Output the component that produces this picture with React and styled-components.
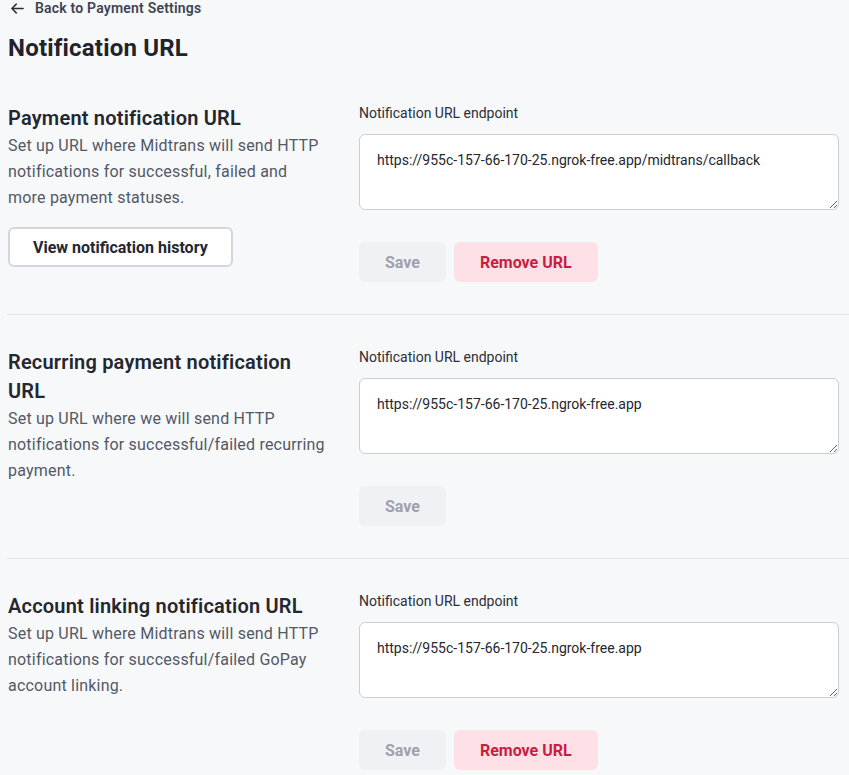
import React from "react";
import styled, { createGlobalStyle } from "styled-components";

const Global = createGlobalStyle`
  html, body { margin: 0; padding: 0; background: #f7f8fa; }
  body { font-family: Roboto, "Noto Sans", Arial, sans-serif; color: #1f232b; }
  * { box-sizing: border-box; }
`;

const Page = styled.div`
  padding: 0 0 0 7px;
  width: 849px;
`;

const BackLink = styled.a`
  display: flex;
  align-items: center;
  gap: 10px;
  height: 16px;
  padding-left: 3px;
  font-size: 14px;
  font-weight: 600;
  letter-spacing: 0.2px;
  color: #3d4452;
  text-decoration: none;
  cursor: pointer;
`;

const Title = styled.h1`
  margin: 16px 0 7px 1px;
  font-size: 24px;
  line-height: 32px;
  font-weight: 700;
  letter-spacing: 0.2px;
  color: #1f232b;
`;

const Section = styled.section`
  display: grid;
  grid-template-columns: 319px 480px;
  column-gap: 32px;
  padding: 32px 0 32px 1px;
  border-bottom: ${(p) => (p.$last ? "none" : "1px solid #e1e5ec")};
`;

const Left = styled.div`
  display: flex;
  flex-direction: column;
  align-items: flex-start;
  padding-top: 1px;
`;

const Heading = styled.h2`
  margin: 0;
  font-size: 20px;
  line-height: 29px;
  font-weight: 600;
  letter-spacing: 0.2px;
  color: #23272f;
`;

const Desc = styled.p`
  margin: 0;
  font-size: 16px;
  line-height: 26px;
  letter-spacing: 0.2px;
  color: #525866;
`;

const OutlineButton = styled.button`
  margin-top: 16px;
  height: 40px;
  padding: 0 23px;
  background: #fff;
  border: 2px solid #d3d6dd;
  border-radius: 6px;
  font-family: inherit;
  font-size: 16px;
  font-weight: 700;
  color: #23272f;
  cursor: pointer;
`;

const Right = styled.div`
  display: flex;
  flex-direction: column;
`;

const Label = styled.label`
  font-size: 14px;
  line-height: 20px;
  color: #2b2f38;
`;

const TextArea = styled.textarea`
  display: block;
  margin-top: 11px;
  width: 480px;
  height: 76px;
  padding: 15px 17px;
  border: 1px solid #c9cdd5;
  border-radius: 6px;
  background: #fff;
  font-family: inherit;
  font-size: 14px;
  line-height: 20px;
  color: #23272f;
  outline: none;
`;

const Actions = styled.div`
  display: flex;
  gap: 8px;
  margin-top: 32px;
`;

const Btn = styled.button`
  height: 40px;
  padding: 0 26px;
  border: none;
  border-radius: 6px;
  font-family: inherit;
  font-size: 16px;
  font-weight: 700;
  cursor: pointer;
  background: ${(p) => (p.$danger ? "#fde1e7" : "#eff1f4")};
  color: ${(p) => (p.$danger ? "#c81d3f" : "#9da1ac")};
`;

const ArrowLeft = () => (
  <svg width="15" height="15" viewBox="0 0 24 24" fill="none" stroke="#2b2f38" strokeWidth="2.4" strokeLinecap="round" strokeLinejoin="round">
    <path d="M21 12H4" />
    <path d="M10 5l-7 7 7 7" />
  </svg>
);

const sections = [
  {
    title: "Payment notification URL",
    desc: "Set up URL where Midtrans will send HTTP notifications for successful, failed and more payment statuses.",
    history: true,
    value: "https://955c-157-66-170-25.ngrok-free.app/midtrans/callback",
    remove: true,
  },
  {
    title: "Recurring payment notification URL",
    desc: "Set up URL where we will send HTTP notifications for successful/failed recurring payment.",
    value: "https://955c-157-66-170-25.ngrok-free.app",
    remove: false,
  },
  {
    title: "Account linking notification URL",
    desc: "Set up URL where Midtrans will send HTTP notifications for successful/failed GoPay account linking.",
    value: "https://955c-157-66-170-25.ngrok-free.app",
    remove: true,
  },
];

export default function App() {
  return (
    <Page>
      <Global />
      <BackLink>
        <ArrowLeft />
        Back to Payment Settings
      </BackLink>
      <Title>Notification URL</Title>
      {sections.map((s, i) => (
        <Section key={i} $last={i === sections.length - 1}>
          <Left>
            <Heading>{s.title}</Heading>
            <Desc>{s.desc}</Desc>
            {s.history && <OutlineButton>View notification history</OutlineButton>}
          </Left>
          <Right>
            <Label>Notification URL endpoint</Label>
            <TextArea defaultValue={s.value} />
            <Actions>
              <Btn>Save</Btn>
              {s.remove && <Btn $danger>Remove URL</Btn>}
            </Actions>
          </Right>
        </Section>
      ))}
    </Page>
  );
}
